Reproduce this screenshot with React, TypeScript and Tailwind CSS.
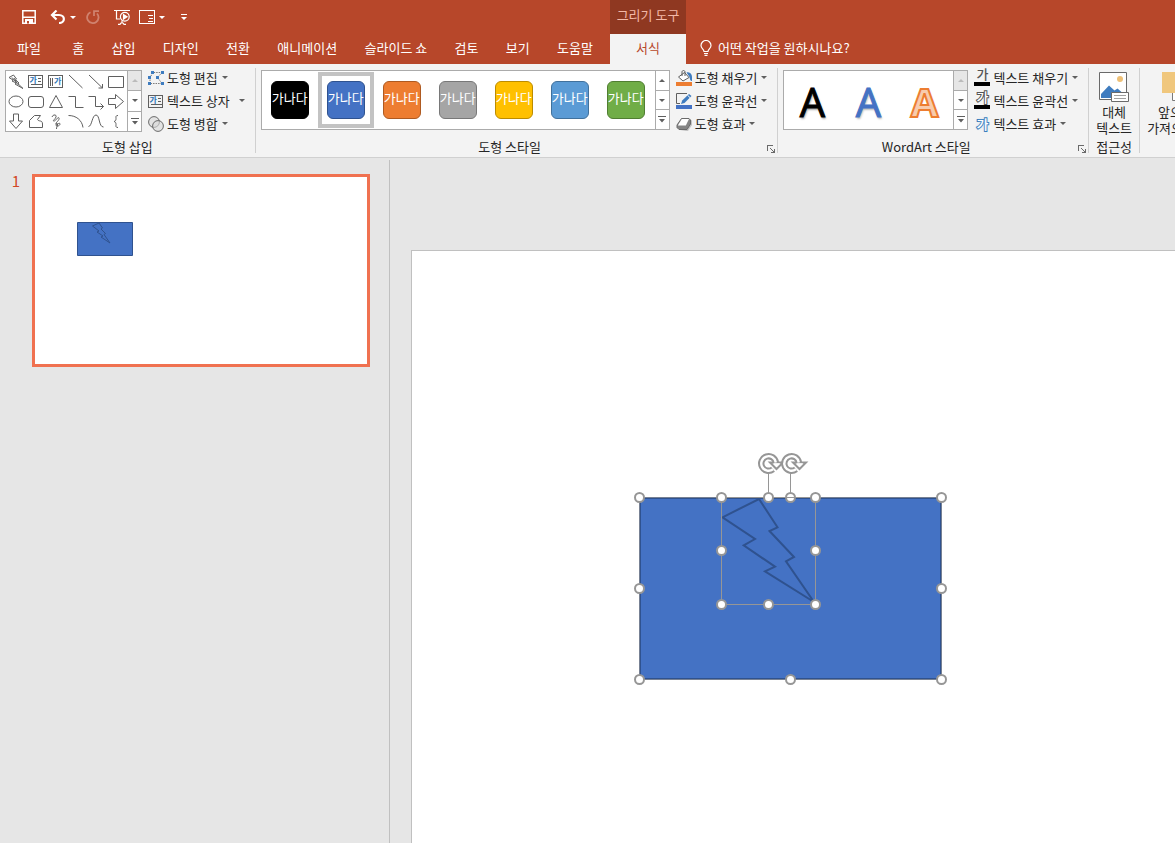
import type { ReactNode } from 'react';

const tabs = ['홈', '삽입', '디자인', '전환', '애니메이션', '슬라이드 쇼', '검토', '보기', '도움말'];

const styleTiles = [
  { name: '검정', className: 'bg-black border-black' },
  { name: '파랑', className: 'bg-[#4472c4] border-[#2f528f]', selected: true },
  { name: '주황', className: 'bg-[#ed7d31] border-[#ae5a21]' },
  { name: '회색', className: 'bg-[#a5a5a5] border-[#787878]' },
  { name: '금색', className: 'bg-[#ffc000] border-[#bc8c00]' },
  { name: '하늘색', className: 'bg-[#5b9bd5] border-[#41719c]' },
  { name: '녹색', className: 'bg-[#70ad47] border-[#507e32]' },
];

const wordArts = [
  { name: '채우기 검정', className: 'text-black [-webkit-text-stroke:1px_#000] [text-shadow:1px_2px_2px_#0005]' },
  { name: '채우기 파랑', className: 'text-[#4472c4] [-webkit-text-stroke:1px_#4472c4] [text-shadow:1px_2px_2px_#0004]' },
  { name: '채우기 주황', className: 'font-bold text-[#f8cbad] [-webkit-text-stroke:2px_#ed7d31]' },
];

const shapes: { name: string; icon: ReactNode }[] = [
  { name: '번개', icon: <path d="M1 4.5 5.5 2l3 4-1 .7 3.500 3.300-1 .7L15 15.500l-8-4.500 1.300-1L4 8l1.300-.8zM4 4.500l6.500 7.500M6 5l3 5" /> },
  { name: '텍스트 상자', icon: <TextBoxGlyph /> },
  {
    name: '세로 텍스트 상자',
    icon: (
      <>
        <path d="M.5 2.5h14v12H.5zM2.500 4.500v8M4.500 4.500v8" shapeRendering="crispEdges" />
        <text x="6" y="10.500" fontSize="8" fontWeight="700" fill="#2e75b6" stroke="none">가</text>
      </>
    ),
  },
  { name: '선', icon: <path d="m1 2 13.5 13" /> },
  { name: '화살표', icon: <path d="m1 2 13.5 13M14.5 11v4h-4" /> },
  { name: '직사각형', icon: <path d="M.5 3.5h15v11H.5z" /> },
  { name: '타원', icon: <ellipse cx="8" cy="8.5" rx="7" ry="5.5" /> },
  { name: '둥근 사각형', icon: <rect x=".5" y="3.5" width="15" height="11" rx="2.5" /> },
  { name: '삼각형', icon: <path d="M8 2.5l6.5 12h-13z" /> },
  { name: '꺾인 연결선', icon: <path d="M.5 3.5h7v11h8" /> },
  { name: '꺾인 화살표', icon: <path d="M.5 3.5h7v10h8M12.500 10.500l3 3-3 3" /> },
  { name: '오른쪽 화살표', icon: <path d="M.5 5.5h7v-4l8 7-8 7v-4h-7z" /> },
  { name: '아래쪽 화살표', icon: <path d="M5.500 1h5v7h4L8 15.500 1.500 8h4z" /> },
  { name: '자유형', icon: <path d="M1.500 14.500v-7l5-5h6l-3 4c1 2.500 5 0 5 4.500v3.500z" /> },
  { name: '자유 곡선', icon: <path d="M4 4c1-3 5-2.500 4 0S4 8 6 8s4-5 5-3-4 5-3 6 4-2 4 0-4 3-4 1 2-2 1.500 0-1 2-1 4" /> },
  { name: '호', icon: <path d="M.5 2.500C8 2.500 14 7 15 14.500" /> },
  { name: '곡선', icon: <path d="M.5 13.500C4 13.500 4 2 8 2s2.500 12 7.500 12" /> },
  { name: '왼쪽 중괄호', icon: <path d="M10 2.500c-2.500 0-2 1-2 3S7.500 8 6 8.500c1.500.5 2 1 2 3s-.5 3 2 3" /> },
];

export default function App() {
  return (
    <div className="flex h-screen flex-col overflow-hidden bg-[#e6e6e6] font-['Noto_Sans_CJK_KR',sans-serif] text-[13px] leading-4 text-[#262626]">
      <Header />
      <Ribbon />
      <div className="flex min-h-0 flex-1 pt-0.5">
        <SlideList />
        <main className="min-w-0 flex-1 pt-[90px] pl-[21px]">
          <div className="relative h-[1016px] border-t border-l border-[#c0c0c0] bg-white">
            <SelectedShapes />
          </div>
        </main>
      </div>
    </div>
  );
}

function Header() {
  return (
    <header className="flex h-16 shrink-0 bg-[#b7472a] text-white">
      <div className="w-[610px] shrink-0">
        <div className="flex h-[34px] items-center pl-[22px]">
          <button aria-label="저장">
            <svg viewBox="0 0 14 14" className="size-3.5" fill="none" stroke="currentColor" strokeWidth="1.5">
              <path d="M.8.8h12.400v12.400H.8zM1 7.300h12" />
              <path d="M3 9h8v5H3z" fill="currentColor" stroke="none" />
              <path d="M5 11h2v2.500H5z" fill="#b7472a" stroke="none" />
            </svg>
          </button>
          <button aria-label="실행 취소" className="ml-3.5 flex items-center gap-1">
            <svg viewBox="0 0 16 14" className="h-3.5 w-4" fill="none" stroke="currentColor" strokeWidth="2.2">
              <path d="M6.500.5 2 5l4.500 4.500M2.500 5H9c6.500 0 6.500 8 0 8" />
            </svg>
            <Caret />
          </button>
          <button aria-label="다시 실행" className="ml-2.5 text-[#d0826e]">
            <svg viewBox="0 0 14 14" className="size-3.5" fill="none" stroke="currentColor" strokeWidth="1.8">
              <path d="M4.500 2.200A5.700 5.700 0 1 0 11 3.500M8 6V1.200h5" />
            </svg>
          </button>
          <button aria-label="처음부터 시작" className="ml-3.5">
            <svg viewBox="0 0 16 16" className="size-4" fill="none" stroke="currentColor" strokeWidth="1.2">
              <path d="M0 1.500h16M2.500 1.500v8.500H6M8 11.500v2.500M4 15.400h2l1-1.400h2l1 1.400h2" />
              <circle cx="10.800" cy="7.800" r="4.400" />
              <path d="M9.500 5.500v4.600l3.500-2.300z" fill="currentColor" />
            </svg>
          </button>
          <button aria-label="레이아웃" className="ml-[9px] flex items-center gap-1">
            <svg viewBox="0 0 16 14" className="h-3.5 w-4" fill="none" stroke="currentColor" shapeRendering="crispEdges">
              <path d="M.5.5h15v13H.5zM8.500 5.500h5M9.500 8.500h4M8.500 11.500h5" />
            </svg>
            <Caret />
          </button>
          <button aria-label="빠른 실행 도구 모음 사용자 지정" className="ml-4">
            <svg viewBox="0 0 6 6" className="size-1.5" fill="currentColor">
              <path d="M0 0h6v1H0zM0 3h6L3 6z" />
            </svg>
          </button>
        </div>
        <nav className="flex h-7 items-center justify-between pr-1">
          <button className="px-[17px]">파일</button>
          {tabs.map((tab) => (
            <button key={tab} className="px-[13px] whitespace-nowrap">{tab}</button>
          ))}
        </nav>
      </div>
      <div className="flex w-[76px] shrink-0 flex-col">
        <div className="flex h-[34px] items-center justify-center bg-[#8f3821] pb-1 whitespace-nowrap text-[#f3b9a8]">
          그리기 도구
        </div>
        <button className="flex-1 bg-[#f3f3f3] pb-0.5 text-[#b7472a]">서식</button>
      </div>
      <label className="mt-[34px] flex h-7 flex-1 items-center gap-1.5 pl-3.5">
        <svg viewBox="0 0 12 16" className="h-4 w-3" fill="none" stroke="currentColor" strokeWidth="1.2">
          <path d="M4 11.500C4 9 1 8.500 1 5.500a5 5 0 0 1 10 0C11 8.500 8 9 8 11.500zM4 13.500h4M4.500 15.400h3" />
        </svg>
        <input
          type="text"
          aria-label="어떤 작업을 원하시나요?"
          placeholder="어떤 작업을 원하시나요?"
          className="min-w-0 flex-1 bg-transparent outline-none placeholder:text-white"
        />
      </label>
    </header>
  );
}

function Ribbon() {
  return (
    <section className="flex h-[94px] shrink-0 overflow-hidden border-b border-[#d0d0d0] bg-[#f3f3f3] whitespace-nowrap">
      <Group label="도형 삽입">
        <div className="mt-1.5 flex h-[62px] border border-[#ababab] bg-white">
          <div className="grid grid-cols-6 grid-rows-3">
            {shapes.map((shape) => (
              <button key={shape.name} aria-label={shape.name} className="flex size-5 items-center justify-center">
                <svg viewBox="0 0 16 17" className="h-[17px] w-4" fill="none" stroke="#5f5f5f">
                  {shape.icon}
                </svg>
              </button>
            ))}
          </div>
          <GalleryScroll atTop />
        </div>
        <div className="mt-0.5 ml-1.5">
          <Command label="도형 편집" icon={<EditShapeIcon />} />
          <Command
            label="텍스트 상자"
            wide
            icon={
              <svg viewBox="0 0 16 16" className="size-4" fill="none" stroke="#5f5f5f">
                <TextBoxGlyph />
              </svg>
            }
          />
          <Command label="도형 병합" icon={<MergeIcon />} />
        </div>
      </Group>

      <Group label="도형 스타일" launcher>
        <div className="mt-1.5 flex h-[60px] border border-[#ababab] bg-white">
          {styleTiles.map((tile) => (
            <button
              key={tile.name}
              aria-label={tile.name}
              className={`my-px flex size-14 items-center justify-center ${tile.selected ? 'border-4 border-[#c3c3c3]' : ''}`}
            >
              <span className={`flex size-[38px] shrink-0 items-center justify-center rounded-md border pb-1 text-white ${tile.className}`}>
                가나다
              </span>
            </button>
          ))}
          <GalleryScroll />
        </div>
        <div className="mt-0.5 ml-1.5">
          <Command label="도형 채우기" icon={<FillIcon />} />
          <Command label="도형 윤곽선" icon={<OutlineIcon />} />
          <Command label="도형 효과" icon={<EffectIcon />} />
        </div>
      </Group>

      <Group label="WordArt 스타일" launcher>
        <div className="mt-1.5 flex h-[60px] border border-[#ababab] bg-white">
          {wordArts.map((art) => (
            <button
              key={art.name}
              aria-label={art.name}
              className={`flex h-full w-14 items-center justify-center pt-1 font-['Open_Sans',sans-serif] text-[40px] ${art.className}`}
            >
              A
            </button>
          ))}
          <GalleryScroll atTop />
        </div>
        <div className="mt-0.5 ml-1.5">
          <Command
            label="텍스트 채우기"
            icon={
              <span className="flex size-4 flex-col items-center justify-end border-b-4 border-black pb-0.5 leading-3 font-medium text-[#555]">
                가
              </span>
            }
          />
          <Command
            label="텍스트 윤곽선"
            icon={
              <span className="flex size-4 flex-col items-center justify-end border-b-4 border-black pb-0.5 leading-3 font-medium text-white [-webkit-text-stroke:2px_#555] [paint-order:stroke_fill]">
                가
              </span>
            }
          />
          <Command
            label="텍스트 효과"
            icon={
              <span className="flex size-4 items-center justify-center font-medium text-white [-webkit-text-stroke:2px_#2e75b6] [paint-order:stroke_fill] [text-shadow:0_0_3px_#9dc3e6]">
                가
              </span>
            }
          />
        </div>
      </Group>

      <Group label="접근성">
        <button className="flex w-[45px] flex-col items-center pt-2 pr-[5px]">
          <AltTextIcon />
          <span className="mt-px">대체</span>
          <span>텍스트</span>
        </button>
      </Group>

      <div className="flex shrink-0 pl-[7px]">
        <button className="flex flex-col items-center pt-2">
          <svg viewBox="0 0 30 31" className="h-[31px] w-[30px]">
            <path d="M11.500 15.500h18v13h-18z" fill="#fff" stroke="#7a7a7a" />
            <path d="M1 0h21v21H1z" fill="#f0c77d" />
          </svg>
          <span className="mt-px">앞으로</span>
          <span className="flex items-center gap-1">
            가져오기 <Caret />
          </span>
        </button>
      </div>
    </section>
  );
}

function Group({ label, launcher, children }: { label: string; launcher?: boolean; children: ReactNode }) {
  return (
    <>
      <div className="flex shrink-0 flex-col">
        <div className="flex flex-1 items-start pl-[5px]">{children}</div>
        <div className="flex h-5 items-center pb-px">
          <span className="flex-1 text-center">{label}</span>
          {launcher && (
            <button aria-label={`${label} 대화 상자`} className="w-3.5 pt-1">
              <svg viewBox="0 0 8 8" className="ml-1 size-2" fill="none" stroke="#6a6a6a" shapeRendering="crispEdges">
                <path d="M.5 6V.5H6M7.500 4v3.500H4M3 3l4 4" />
              </svg>
            </button>
          )}
        </div>
      </div>
      <span className="my-1 w-px shrink-0 bg-[#d0d0d0]" />
    </>
  );
}

function GalleryScroll({ atTop }: { atTop?: boolean }) {
  return (
    <div className="ml-px flex w-3.5 flex-col divide-y divide-[#ababab] border-l border-[#ababab] text-[#5f5f5f]">
      <button aria-label="위로" className={`flex flex-1 items-center justify-center ${atTop ? 'bg-[#e6e6e6] text-[#bbb]' : ''}`}>
        <svg viewBox="0 0 6 3" className="h-[3px] w-1.5" fill="currentColor">
          <path d="M0 3h6L3 0z" />
        </svg>
      </button>
      <button aria-label="아래로" className="flex flex-1 items-center justify-center">
        <Caret />
      </button>
      <button aria-label="자세히" className="flex flex-1 items-center justify-center">
        <svg viewBox="0 0 8 7" className="h-[7px] w-2" fill="currentColor">
          <path d="M0 0h8v1H0zM1 3h6L4 6.500z" />
        </svg>
      </button>
    </div>
  );
}

function Command({ label, icon, wide }: { label: string; icon: ReactNode; wide?: boolean }) {
  return (
    <button className="flex h-[23px] items-center pr-2.5">
      {icon}
      <span className="ml-[3px]">{label}</span>
      <span className={`text-[#5f5f5f] ${wide ? 'ml-[9px]' : 'ml-1'}`}>
        <Caret />
      </span>
    </button>
  );
}

function Caret() {
  return (
    <svg viewBox="0 0 6 3" className="block h-[3px] w-1.5" fill="currentColor">
      <path d="M0 0h6L3 3z" />
    </svg>
  );
}

function TextBoxGlyph() {
  return (
    <>
      <path d="M.5 2.500h14v12H.5zM10 5.500h3M10 8.500h3M2.500 11.500h11" shapeRendering="crispEdges" />
      <text x="1.500" y="9.500" fontSize="8" fontWeight="700" fill="#2e75b6" stroke="none">가</text>
    </>
  );
}

function EditShapeIcon() {
  return (
    <svg viewBox="0 0 16 16" className="size-4">
      <path d="M2 13.500V7.500L5 2.500h9l-4.500 5 4.500 6z" fill="none" stroke="#7a7a7a" strokeDasharray="1.500 1" />
      <path d="M3 1h3v3H3zM13 1h3v3h-3zM0 6h3v3H0zM8 6h3v3H8zM0 12h3v3H0zM13 12h3v3h-3z" fill="#3f7cbf" />
    </svg>
  );
}

function MergeIcon() {
  return (
    <svg viewBox="0 0 16 16" className="size-4" fill="#d9d9d9" fillOpacity=".6" stroke="#6a6a6a">
      <circle cx="6" cy="6" r="5.400" />
      <circle cx="10" cy="10" r="5.400" />
    </svg>
  );
}

function FillIcon() {
  return (
    <svg viewBox="0 0 16 16" className="size-4">
      <path d="M2.500 7 8.500 2.500 13 7.500l-6 3.500z" fill="#fff" stroke="#5f5f5f" />
      <path d="M6 6V2c0-2 3-2 3 0v4" fill="none" stroke="#5f5f5f" />
      <path d="M10.500 2.500C14 1.500 16 4 16 7v4c-2 0-2-2-2.500-4z" fill="#3f7cbf" />
      <path d="M0 12h16v4H0z" fill="#ed7d31" />
    </svg>
  );
}

function OutlineIcon() {
  return (
    <svg viewBox="0 0 16 16" className="size-4">
      <path d="M11 .5H.5v10H4" fill="none" stroke="#5f5f5f" />
      <path d="m5 11 1.200-3.500L13 1l2.500 2L8.500 10z" fill="#3f7cbf" />
      <path d="M11.500 2.200 14 4.600" stroke="#fff" />
      <path d="M0 12h16v4H0z" fill="#4472c4" />
    </svg>
  );
}

function EffectIcon() {
  return (
    <svg viewBox="0 0 16 16" className="size-4" strokeLinejoin="round">
      <path d="M4 15h8l4-6V4l-2 1-4 9z" fill="#c4c4c4" />
      <path d="M5.500 2.500H13l1.500 1.500v4L11 13.500H3L1 11.500V9z" fill="#858585" stroke="#6a6a6a" />
      <path d="M5.800 3H13L9.800 9.500H1.800z" fill="#fff" />
    </svg>
  );
}

function AltTextIcon() {
  return (
    <svg viewBox="0 0 30 31" className="h-[31px] w-[30px]">
      <path d="M.5.5h27v27H.5z" fill="#fff" stroke="#6a6a6a" />
      <circle cx="21" cy="7" r="3" fill="#eec077" />
      <path d="M2 26v-4l8-8.500 5.500 5 3-2 4 3.500v6z" fill="#3f7cbf" />
      <path d="M12.500 20.500h17v9h-17z" fill="#fff" stroke="#6a6a6a" />
      <path d="M15 23.500h12M15 26.500h12" stroke="#a0a0a0" />
    </svg>
  );
}

function SlideList() {
  return (
    <aside className="flex w-[390px] shrink-0 items-start border-r border-[#c0c0c0] pt-3.5">
      <span className="w-8 text-center text-[15px] leading-3.5 text-[#d24726]">1</span>
      <button aria-label="슬라이드 1" className="relative h-[193px] w-[338px] border-[3px] border-[#f07150] bg-white">
        <svg viewBox="0 0 56 34" className="absolute top-[45px] left-[42px] h-[34px] w-14">
          <path d="M.5.5h55v33H.5z" fill="#4472c4" stroke="#2f528f" />
          <path
            d="M15.500 4 22 1l3.500 5-1.500 1 4.500 4.500-1.500 1L33 21l-9-6 2-1-6-4 2-1z"
            fill="none"
            stroke="#2f528f"
          />
        </svg>
      </button>
    </aside>
  );
}

const handles = [
  [14.5, 57.5], [96.5, 57.5], [143.5, 57.5], [165.5, 57.5], [190.5, 57.5], [316.5, 57.5],
  [96.5, 110.5], [190.5, 110.5],
  [14.5, 148.5], [316.5, 148.5],
  [96.5, 164.5], [143.5, 164.5], [190.5, 164.5],
  [14.5, 239.5], [165.5, 239.5], [316.5, 239.5],
];

function SelectedShapes() {
  return (
    <svg viewBox="0 0 330 260" className="absolute top-[189px] left-[213px] h-[260px] w-[330px]" fill="none">
      <path d="M15 58h301v181H15z" fill="#4472c4" stroke="#2f528f" strokeWidth="2" />
      <path
        d="M97.500 77.300 134 59l18.500 28.300-8 3.700 24.500 26-8 4.300L189 162l-49-30.700 10-4.600-31.300-21.400L130 99z"
        stroke="#2f528f"
        strokeWidth="2"
      />
      <g stroke="#969696">
        <path d="M14.500 57.500h302v182h-302z" strokeOpacity=".7" />
        <path d="M96.500 57.500h94v107h-94zM143.500 33v20M165.500 33v20" />
      </g>
      {handles.map(([x, y]) => (
        <circle key={`${x}-${y}`} cx={x} cy={y} r="4.5" fill="#fff" stroke="#969696" strokeWidth="2" />
      ))}
      <path d="M161 57.500h9" stroke="#969696" />
      <RotateHandle x={143.5} />
      <RotateHandle x={166.5} />
    </svg>
  );
}

function RotateHandle({ x }: { x: number }) {
  const arc = 'M7.300-1A7.300 7.300 0 1 0 4.500 5.800';
  return (
    <g transform={`translate(${x} 23.500)`}>
      <path d={arc} stroke="#969696" strokeWidth="6.400" />
      <path d="M1.500-1h13L8 5.500z" fill="#fff" stroke="#969696" strokeWidth="2" />
      <path d={arc} stroke="#fff" strokeWidth="2.400" />
      <path d="M5-.2h6.500L8 3.500z" fill="#fff" />
    </g>
  );
}
